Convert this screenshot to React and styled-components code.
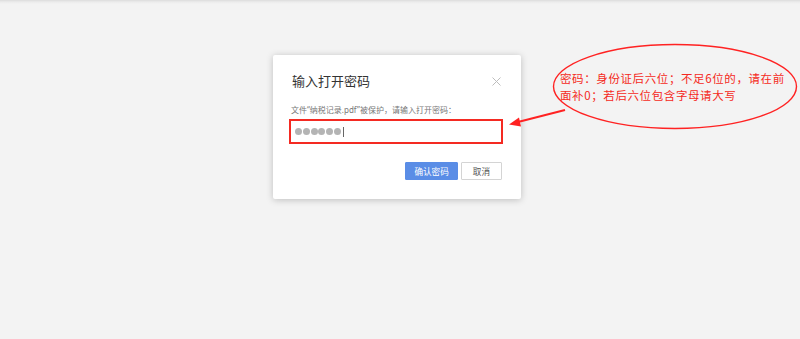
import React from "react"
import styled, { createGlobalStyle } from "styled-components"

const GlobalStyle = createGlobalStyle`
  html, body {
    margin: 0;
    padding: 0;
  }
  body {
    font-family: "Noto Sans CJK SC", "Noto Sans", sans-serif;
    background: #f3f3f3;
  }
`

const App = () => {
  return (
    <Page>
      <GlobalStyle />
      <Dialog>
        <Header>
          <Title>输入打开密码</Title>
          <Close aria-label="close">
            <svg width="9" height="9" viewBox="0 0 9 9">
              <path d="M0.5 0.5 L8.5 8.5 M8.5 0.5 L0.5 8.5" stroke="#bdbdbd" strokeWidth="1" />
            </svg>
          </Close>
        </Header>
        <Label>文件“纳税记录.pdf”被保护，请输入打开密码：</Label>
        <PasswordBox>
          {[0, 1, 2, 3, 4, 5].map((i) => (
            <Dot key={i} />
          ))}
          <Caret />
        </PasswordBox>
        <Actions>
          <Button primary>确认密码</Button>
          <Button>取消</Button>
        </Actions>
      </Dialog>

      <Note>
        <svg width="300" height="100" viewBox="0 0 300 100">
          <ellipse cx="175" cy="46.5" rx="121.5" ry="42" fill="none" stroke="#f22" strokeWidth="1.4" />
          <path d="M65 70 L16 82.5" stroke="#f22" strokeWidth="2" fill="none" />
          <path d="M9 84.5 L19 77.5 L21 86.5 Z" fill="#f22" />
        </svg>
        <NoteText>
          <NoteLine>密码：身份证后六位；不足6位的，请在前</NoteLine>
          <NoteLine>面补0；若后六位包含字母请大写</NoteLine>
        </NoteText>
      </Note>
    </Page>
  )
}

export default App

const Page = styled.div`
  position: relative;
  height: 339px;
  overflow: hidden;
  padding: 55px 0 0 273px;
  box-sizing: border-box;
  background: linear-gradient(#dcdcdc, #ececec 2px, #f3f3f3 4px);
`

const Dialog = styled.div`
  width: 248px;
  box-sizing: border-box;
  background: #fff;
  border-radius: 2px;
  box-shadow: 0 1px 7px rgba(0, 0, 0, 0.22);
  padding: 18px 18px 19px 16px;
`

const Header = styled.div`
  display: flex;
  align-items: center;
  justify-content: space-between;
  padding-left: 3px;
  height: 16px;
`

const Title = styled.div`
  font-size: 13px;
  line-height: 16px;
  color: #333;
`

const Close = styled.div`
  display: flex;
  margin-right: 2px;
`

const Label = styled.div`
  margin-top: 15px;
  padding-left: 2px;
  font-family: "Noto Sans", "Noto Sans CJK SC", sans-serif;
  font-size: 8px;
  line-height: 12px;
  color: #777;
  white-space: nowrap;
`

const PasswordBox = styled.div`
  margin-top: 3px;
  height: 25px;
  box-sizing: border-box;
  border: 2px solid #f42a22;
  display: flex;
  align-items: center;
  gap: 0.8px;
  padding-left: 4px;
`

const Dot = styled.span`
  width: 7px;
  height: 7px;
  border-radius: 50%;
  background: #b4b4b4;
`

const Caret = styled.span`
  width: 1px;
  height: 10px;
  margin-left: 1px;
  background: #666;
`

const Actions = styled.div`
  margin-top: 18px;
  display: flex;
  justify-content: flex-end;
  gap: 3px;
  padding-right: 1px;
`

const Button = styled.div`
  height: 18px;
  box-sizing: border-box;
  padding: 0 ${(p) => (p.primary ? "8px" : "11px")};
  display: flex;
  align-items: center;
  font-size: 8.6px;
  border-radius: 1px;
  color: ${(p) => (p.primary ? "#fff" : "#555")};
  background: ${(p) => (p.primary ? "#5a8de6" : "#fff")};
  border: 1px solid ${(p) => (p.primary ? "#5a8de6" : "#d4d4d4")};
`

const Note = styled.div`
  position: absolute;
  left: 500px;
  top: 40px;
  width: 300px;
  height: 100px;
  svg {
    position: absolute;
    left: 0;
    top: 0;
  }
`

const NoteText = styled.div`
  position: absolute;
  left: 60px;
  top: 30px;
  display: flex;
  flex-direction: column;
  color: #f52a22;
  white-space: nowrap;
`

const NoteLine = styled.div`
  font-size: 11.5px;
  letter-spacing: 0.6px;
  line-height: 16.7px;
  height: 16.7px;
`
